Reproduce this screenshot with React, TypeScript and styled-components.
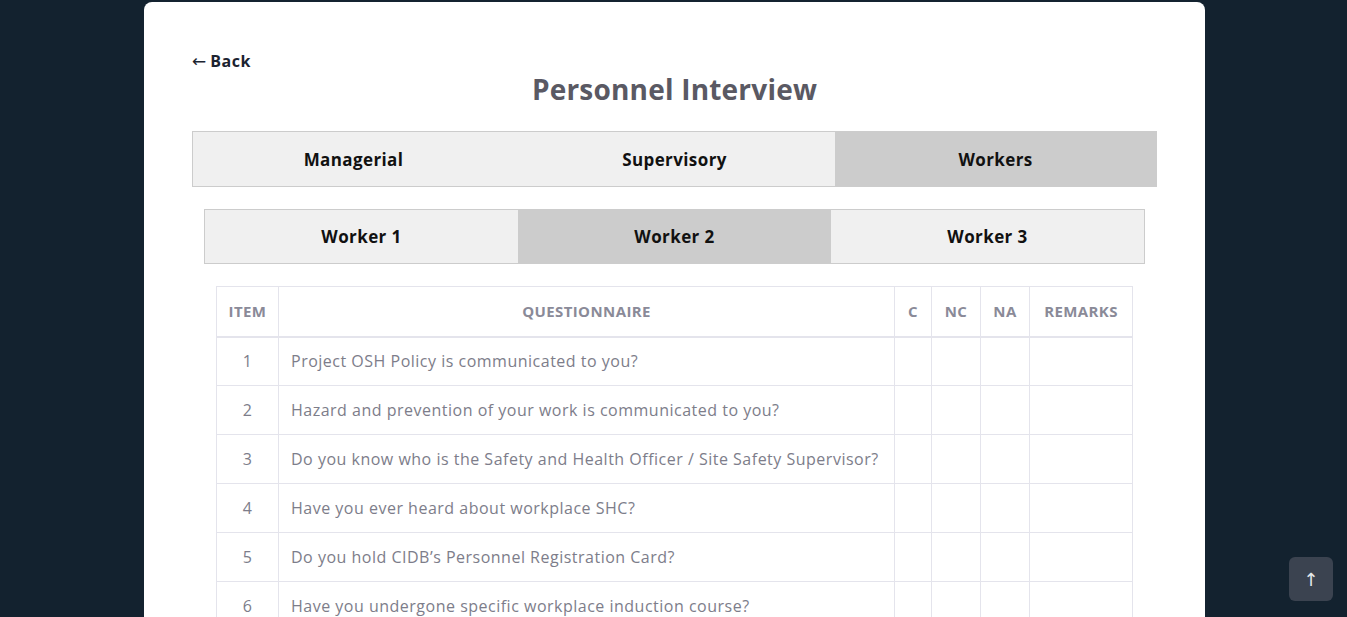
import React from 'react';
import styled, { createGlobalStyle } from 'styled-components';

const GlobalStyle = createGlobalStyle`
  html, body {
    margin: 0;
    padding: 0;
    background-color: #13222f;
    font-family: 'Open Sans', 'Noto Sans', sans-serif;
    overflow: hidden;
  }
  * {
    box-sizing: border-box;
  }
`;

const questions = [
  'Project OSH Policy is communicated to you?',
  'Hazard and prevention of your work is communicated to you?',
  'Do you know who is the Safety and Health Officer / Site Safety Supervisor?',
  'Have you ever heard about workplace SHC?',
  'Do you hold CIDB\u2019s Personnel Registration Card?',
  'Have you undergone specific workplace induction course?',
  'Do you know what to do in case of emergency?',
];

const categories = ['Managerial', 'Supervisory', 'Workers'];
const workers = ['Worker 1', 'Worker 2', 'Worker 3'];

function App() {
  const activeCategory = 2;
  const activeWorker = 1;

  return (
    <>
      <GlobalStyle />
      <Page>
        <Card>
          <BackLink href="#">
            <span className="arrow">&larr;</span>Back
          </BackLink>
          <Title>Personnel Interview</Title>

          <TabRow>
            {categories.map((c, i) => (
              <Tab key={c} active={i === activeCategory}>
                {c}
              </Tab>
            ))}
          </TabRow>

          <SubTabRow>
            {workers.map((w, i) => (
              <Tab key={w} active={i === activeWorker}>
                {w}
              </Tab>
            ))}
          </SubTabRow>

          <Table>
            <colgroup>
              <col style={{ width: 62 }} />
              <col />
              <col style={{ width: 37 }} />
              <col style={{ width: 49 }} />
              <col style={{ width: 49 }} />
              <col style={{ width: 103 }} />
            </colgroup>
            <thead>
              <tr>
                <Th>ITEM</Th>
                <Th>QUESTIONNAIRE</Th>
                <Th>C</Th>
                <Th>NC</Th>
                <Th>NA</Th>
                <Th>REMARKS</Th>
              </tr>
            </thead>
            <tbody>
              {questions.map((q, i) => (
                <tr key={q}>
                  <Td center>{i + 1}</Td>
                  <Td>{q}</Td>
                  <Td />
                  <Td />
                  <Td />
                  <Td />
                </tr>
              ))}
            </tbody>
          </Table>
        </Card>
      </Page>
      <ScrollTop aria-label="Scroll to top">&uarr;</ScrollTop>
    </>
  );
}

const Page = styled.div`
  min-height: 100vh;
  padding-top: 2px;
  display: flex;
  justify-content: center;
`;

const Card = styled.div`
  width: 1061px;
  margin-left: 2px;
  background-color: #ffffff;
  border-radius: 8px;
  padding: 48px 48px 40px;
  box-shadow: 0 0 30px rgba(255, 255, 255, 0.02);
`;

const BackLink = styled.a`
  display: inline-flex;
  align-items: center;
  color: #1b2330;
  font-weight: 700;
  font-size: 16px;
  letter-spacing: 0.5px;
  text-decoration: none;
  line-height: 22px;

  & .arrow {
    font-family: 'DejaVu Sans', sans-serif;
    font-weight: 400;
    font-size: 17px;
    margin-right: 4px;
    letter-spacing: 0;
  }
`;

const Title = styled.h1`
  margin: -1px 0 24px;
  text-align: center;
  color: #5a5963;
  font-size: 28px;
  font-weight: 700;
  letter-spacing: 0.2px;
  line-height: 36px;
`;

const TabRow = styled.div`
  display: flex;
  border: 1px solid #cccccc;
  height: 56px;
`;

const SubTabRow = styled(TabRow)`
  margin: 22px 12px 22px;
  height: 55px;
`;

const Tab = styled.div<{ active?: boolean }>`
  flex: 1;
  display: flex;
  align-items: center;
  justify-content: center;
  font-weight: 700;
  font-size: 17px;
  letter-spacing: 0.4px;
  color: #111111;
  background-color: ${({ active }) => (active ? '#cccccc' : '#f0f0f0')};
`;

const Table = styled.table`
  margin: 0 24px;
  width: 917px;
  border-collapse: collapse;
  table-layout: fixed;
`;

const Th = styled.th`
  height: 50px;
  padding: 0;
  border: 1px solid #e4e4ec;
  border-bottom-width: 2px;
  color: #8a8a98;
  font-size: 15px;
  letter-spacing: 0.4px;
  font-weight: 700;
  text-align: center;
`;

const Td = styled.td<{ center?: boolean }>`
  height: 49px;
  border: 1px solid #e4e4ec;
  color: #7d7d8a;
  font-size: 16px;
  letter-spacing: 0.5px;
  padding: 0 12px;
  white-space: nowrap;
  text-align: ${({ center }) => (center ? 'center' : 'left')};
`;

const ScrollTop = styled.button`
  position: fixed;
  right: 14px;
  bottom: 16px;
  width: 44px;
  height: 44px;
  border: none;
  border-radius: 6px;
  background-color: #3b4350;
  color: #e6e8eb;
  font-size: 18px;
  font-family: 'DejaVu Sans', sans-serif;
  cursor: pointer;
`;

export default App;
